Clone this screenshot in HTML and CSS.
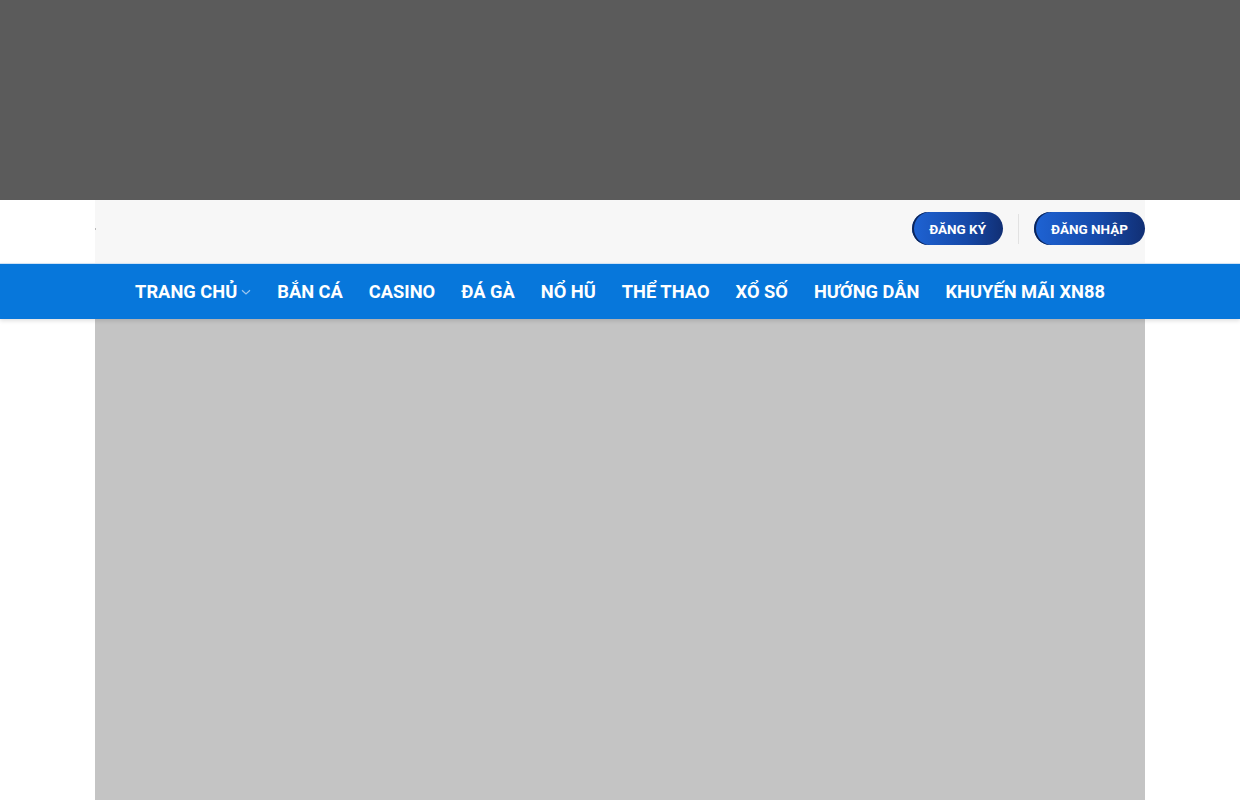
FILE: index.html
```html
<!DOCTYPE html>
<html lang="vi">
<head>
    <meta charset="UTF-8">
    <meta name="viewport" content="width=device-width, initial-scale=1.0">
    <title>XN88</title>
    <link rel="stylesheet" href="styles.css">
</head>
<body>

    <div class="top-banner"></div>

    <header class="header">
        <div class="header-inner">
            <a class="logo" href="#"></a>
            <div class="header-actions">
                <a class="btn" href="#">ĐĂNG KÝ</a>
                <span class="divider"></span>
                <a class="btn" href="#">ĐĂNG NHẬP</a>
            </div>
        </div>
    </header>

    <nav class="main-nav">
        <ul class="nav-list">
            <li class="nav-item">
                <a href="#">TRANG CHỦ</a>
                <svg class="chevron" width="10" height="10" viewBox="0 0 10 10">
                    <path d="M1 3.2 L5 7 L9 3.2" fill="none" stroke="#9cc6ef" stroke-width="1.2"/>
                </svg>
            </li>
            <li class="nav-item"><a href="#">BẮN CÁ</a></li>
            <li class="nav-item"><a href="#">CASINO</a></li>
            <li class="nav-item"><a href="#">ĐÁ GÀ</a></li>
            <li class="nav-item"><a href="#">NỔ HŨ</a></li>
            <li class="nav-item"><a href="#">THỂ THAO</a></li>
            <li class="nav-item"><a href="#">XỔ SỐ</a></li>
            <li class="nav-item"><a href="#">HƯỚNG DẪN</a></li>
            <li class="nav-item"><a href="#">KHUYẾN MÃI XN88</a></li>
        </ul>
    </nav>

    <main class="content">
        <div class="slider"></div>
    </main>

</body>
</html>
```

FILE: styles.css
```css
body {
    margin: 0;
    font-family: Roboto, "Liberation Sans", sans-serif;
    background-color: #fff;
    height: 800px;
    overflow: hidden;
}

a {
    text-decoration: none;
}

.top-banner {
    height: 200px;
    background-color: #5b5b5b;
}

.header-inner {
    width: 1050px;
    height: 63px;
    margin: 0 auto;
    background-color: #f7f7f7;
    display: flex;
    align-items: center;
    justify-content: space-between;
    box-sizing: border-box;
}

.logo {
    width: 1px;
    height: 2px;
    margin-top: -6px;
    background-color: #bbb;
}

.header-actions {
    display: flex;
    align-items: center;
    gap: 15px;
    margin-top: -6px;
}

.btn {
    display: flex;
    align-items: center;
    justify-content: center;
    height: 33px;
    padding: 0 17px;
    border-radius: 17px;
    font-size: 13.5px;
    font-weight: 700;
    color: #fff;
    background: linear-gradient(90deg, #1e63d4 0%, #1649a8 60%, #112f74 100%);
    box-shadow: inset 2px 0 0 #0d2558;
}

.divider {
    width: 1px;
    height: 30px;
    background-color: #e2e2e2;
}

.main-nav {
    height: 55px;
    background-color: #0777db;
    border-top: 1px solid #cfe2f5;
    box-shadow: 0 2px 4px rgba(0, 0, 0, 0.12);
    position: relative;
    z-index: 1;
}

.nav-list {
    list-style: none;
    margin: 0;
    padding: 0;
    height: 100%;
    display: flex;
    justify-content: center;
    align-items: center;
    gap: 26px;
}

.nav-item {
    display: flex;
    align-items: center;
    gap: 4px;
}

.nav-item a {
    color: #fff;
    font-size: 18.3px;
    font-weight: 700;
}

.chevron {
    margin-top: 1px;
}

.content {
    width: 1050px;
    margin: 0 auto;
}

.slider {
    height: 482px;
    background-color: #c4c4c4;
}
```
